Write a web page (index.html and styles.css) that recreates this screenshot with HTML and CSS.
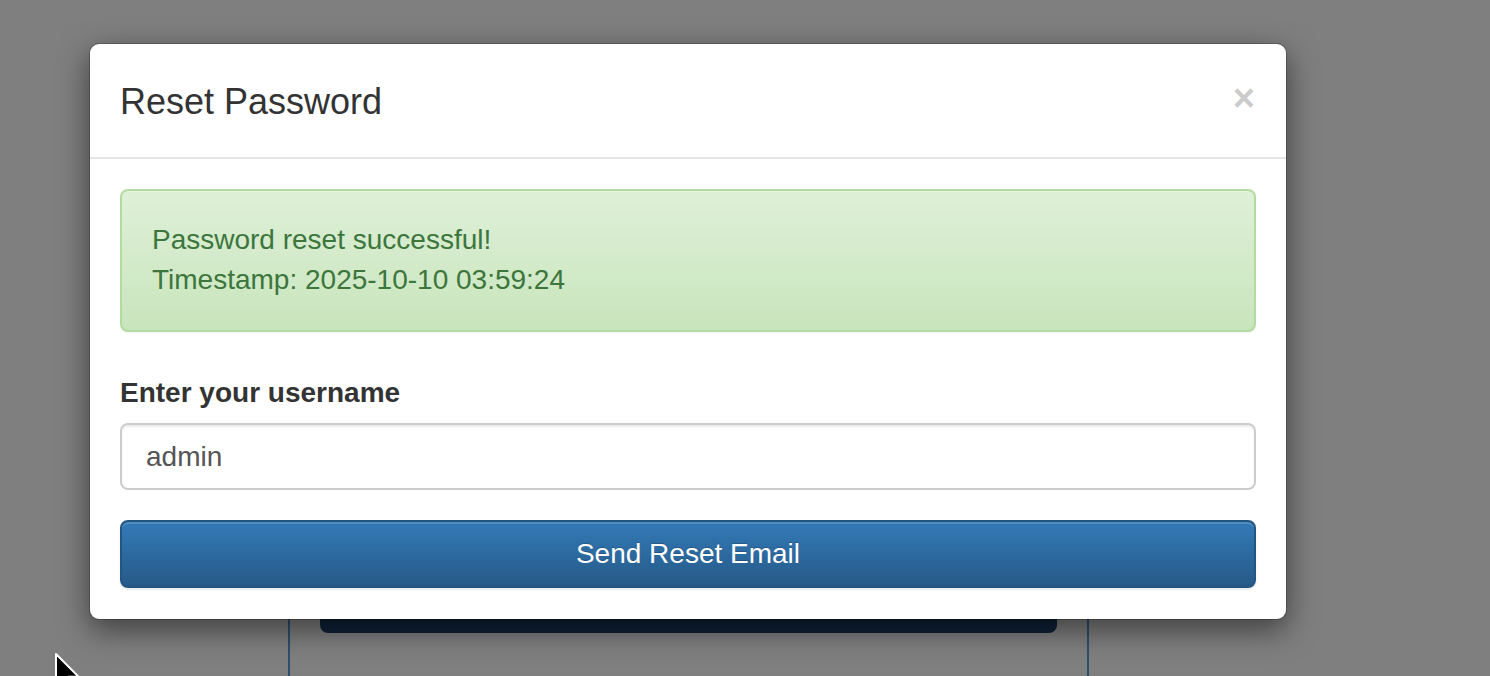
FILE: index.html
```html
<!DOCTYPE html>
<html lang="en">
<head>
<meta charset="utf-8">
<title>Reset Password</title>
<link rel="stylesheet" href="styles.css">
</head>
<body>
<div class="page">
  <div class="panel">
    <div class="panel-btn"></div>
  </div>
</div>
<div class="backdrop"></div>
<div class="modal">
  <div class="modal-header">
    <span class="close">&times;</span>
    <h4 class="modal-title">Reset Password</h4>
  </div>
  <div class="modal-body">
    <div class="alert">Password reset successful!<br>Timestamp: 2025-10-10 03:59:24</div>
    <div class="form-group">
      <label class="label" for="username">Enter your username</label>
      <input class="input" id="username" type="text" value="admin">
    </div>
    <button class="btn" type="button">Send Reset Email</button>
  </div>
</div>
<svg class="cursor" width="24" height="40" viewBox="0 0 12 20" aria-hidden="true">
  <path d="M0.5 0.5 L0.5 16.5 L4.3 12.8 L7 19 L9.2 18 L6.6 11.9 L11.8 11.9 Z" fill="#000" stroke="#fff" stroke-width="1" stroke-linejoin="round"/>
</svg>
</body>
</html>
```
FILE: styles.css
```css
html, body {
  margin: 0;
  padding: 0;
}
body {
  width: 1490px;
  height: 676px;
  overflow: hidden;
  background: #ffffff;
  font-family: "Liberation Sans", Arial, Helvetica, sans-serif;
  position: relative;
}
.page {
  height: 676px;
  padding-top: 120px;
  box-sizing: border-box;
}
.panel {
  margin-left: 288px;
  width: 801px;
  height: 556px;
  box-sizing: border-box;
  border-left: 2px solid #5a9ee0;
  border-right: 2px solid #5a9ee0;
  padding: 440px 30px 0 30px;
}
.panel-btn {
  height: 73px;
  background: #1e426e;
  border-radius: 8px;
}
.backdrop {
  position: absolute;
  inset: 0;
  background: rgba(0, 0, 0, 0.5);
}
.modal {
  position: absolute;
  top: 43px;
  left: 89px;
  width: 1198px;
  box-sizing: border-box;
  background: #fff;
  border: 1px solid rgba(0, 0, 0, 0.2);
  border-radius: 10px;
  background-clip: padding-box;
  box-shadow: 0 10px 30px rgba(0, 0, 0, 0.5);
}
.modal-header {
  padding: 32px 30px 30px 30px;
  border-bottom: 2px solid #e5e5e5;
}
.modal-title {
  margin: 0;
  font-size: 36px;
  line-height: 51px;
  font-weight: normal;
  color: #333;
}
.close {
  float: right;
  margin-top: 3px;
  margin-right: 1px;
  font-size: 38px;
  font-weight: bold;
  line-height: 1;
  color: #000;
  opacity: 0.2;
  text-shadow: 0 1px 0 #fff;
}
.modal-body {
  padding: 30px 30px 31px 30px;
}
.alert {
  padding: 29px 30px 30px 30px;
  border: 2px solid #b2dba1;
  border-radius: 8px;
  background: linear-gradient(to bottom, #dff0d8 0%, #c8e5bc 100%);
  color: #3c763d;
  font-size: 28px;
  line-height: 40px;
  margin-bottom: 41px;
  box-shadow: inset 0 1px 0 rgba(255,255,255,.25), 0 1px 2px rgba(0,0,0,.05);
}
.form-group {
  margin-bottom: 30px;
}
.label {
  display: block;
  font-size: 28px;
  line-height: 40px;
  font-weight: bold;
  color: #333;
  margin-bottom: 10px;
}
.input {
  display: block;
  width: 100%;
  height: 67px;
  box-sizing: border-box;
  padding: 12px 24px;
  font-family: "Liberation Sans", Arial, Helvetica, sans-serif;
  font-size: 28px;
  color: #555;
  background: #fff;
  border: 2px solid #ccc;
  border-radius: 8px;
  box-shadow: inset 0 2px 2px rgba(0, 0, 0, 0.075);
  outline: none;
}
.btn {
  display: block;
  width: 100%;
  height: 68px;
  box-sizing: border-box;
  padding: 0 24px;
  font-family: "Liberation Sans", Arial, Helvetica, sans-serif;
  font-size: 28px;
  color: #fff;
  background: linear-gradient(to bottom, #337ab7 0%, #265a88 100%);
  border: 2px solid #245580;
  border-radius: 8px;
  text-shadow: 0 -1px 0 rgba(0, 0, 0, 0.2);
  box-shadow: inset 0 2px 0 rgba(255, 255, 255, 0.15), 0 2px 2px rgba(0, 0, 0, 0.075);
}
.cursor {
  position: absolute;
  left: 55px;
  top: 653px;
}
```
